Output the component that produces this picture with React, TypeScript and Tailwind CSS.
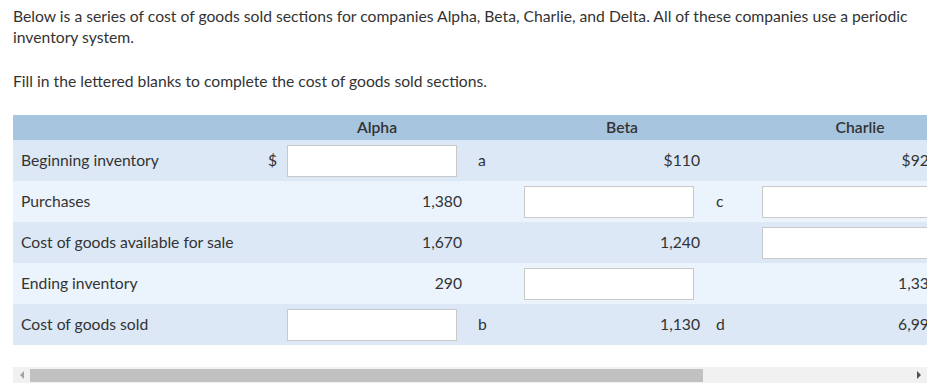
const rows = [
  {
    label: "Beginning inventory",
    bg: "bg-[#dce8f6]",
    alpha: { dollar: true, input: true, letter: "a" },
    beta: { value: "$110" },
    charlie: { value: "$920" },
  },
  {
    label: "Purchases",
    bg: "bg-[#ebf3fd]",
    alpha: { value: "1,380" },
    beta: { input: true, letter: "c" },
    charlie: { input: true },
  },
  {
    label: "Cost of goods available for sale",
    bg: "bg-[#dce8f6]",
    alpha: { value: "1,670" },
    beta: { value: "1,240" },
    charlie: { input: true },
  },
  {
    label: "Ending inventory",
    bg: "bg-[#ebf3fd]",
    alpha: { value: "290" },
    beta: { input: true },
    charlie: { value: "1,330" },
  },
  {
    label: "Cost of goods sold",
    bg: "bg-[#dce8f6]",
    alpha: { input: true, letter: "b" },
    beta: { value: "1,130", letter: "d" },
    charlie: { value: "6,990" },
  },
]

type Cell = { dollar?: boolean; input?: boolean; value?: string; letter?: string }

function Group({ cell }: { cell: Cell }) {
  return (
    <>
      <td className="pl-[6px] text-left">{cell.dollar ? "$" : ""}</td>
      <td className="text-right">
        {cell.input ? (
          <div className="h-[32px] w-[170px] border border-[#c9c9c9] bg-white" />
        ) : (
          cell.value
        )}
      </td>
      <td className="pl-[16px] text-left">{cell.letter ?? ""}</td>
    </>
  )
}

export default function App() {
  return (
    <div
      className="bg-white pl-[13px] pt-[6px] text-[15.7px] text-[#333333]"
      style={{ fontFamily: "Lato, 'Open Sans', sans-serif" }}
    >
      <p className="w-[914px] leading-[21px]">
        Below is a series of cost of goods sold sections for companies Alpha, Beta, Charlie, and Delta. All of these
        companies use a periodic inventory system.
      </p>
      <p className="mt-[23px] leading-[21px]">Fill in the lettered blanks to complete the cost of goods sold sections.</p>

      <div className="mt-[23px] w-[914px] overflow-hidden">
        <table className="w-[1185px] table-fixed border-collapse">
          <colgroup>
            <col className="w-[249px]" />
            <col className="w-[25px]" />
            <col className="w-[175px]" />
            <col className="w-[30px]" />
            <col className="w-[32px]" />
            <col className="w-[176px]" />
            <col className="w-[52px]" />
            <col className="w-[10px]" />
            <col className="w-[176px]" />
            <col className="w-[30px]" />
            <col className="w-[30px]" />
            <col className="w-[170px]" />
            <col className="w-[30px]" />
          </colgroup>
          <thead>
            <tr className="h-[25px] bg-[#a7c5df]">
              <th />
              <th colSpan={3} className="font-semibold">Alpha</th>
              <th colSpan={3} className="font-semibold">Beta</th>
              <th colSpan={3} className="font-semibold">Charlie</th>
              <th colSpan={3} className="font-semibold">Delta</th>
            </tr>
          </thead>
          <tbody>
            {rows.map((r) => (
              <tr key={r.label} className={`h-[41px] ${r.bg}`}>
                <td className="pl-[8px] text-left">{r.label}</td>
                <Group cell={r.alpha} />
                <Group cell={r.beta} />
                <Group cell={r.charlie} />
                <td colSpan={3} />
              </tr>
            ))}
          </tbody>
        </table>
      </div>

      {/* fake horizontal scrollbar */}
      <div className="mt-[22px] flex h-[16px] w-[914px] items-center bg-[#f1f1f1]">
        <div className="flex w-[17px] justify-center">
          <div className="h-0 w-0 border-y-[4px] border-r-[4px] border-y-transparent border-r-[#a3a3a3]" />
        </div>
        <div className="h-[13px] w-[673px] bg-[#c1c1c1]" />
        <div className="flex-1" />
        <div className="flex w-[17px] justify-center">
          <div className="h-0 w-0 border-y-[4px] border-l-[4px] border-y-transparent border-l-[#505050]" />
        </div>
      </div>
    </div>
  )
}
